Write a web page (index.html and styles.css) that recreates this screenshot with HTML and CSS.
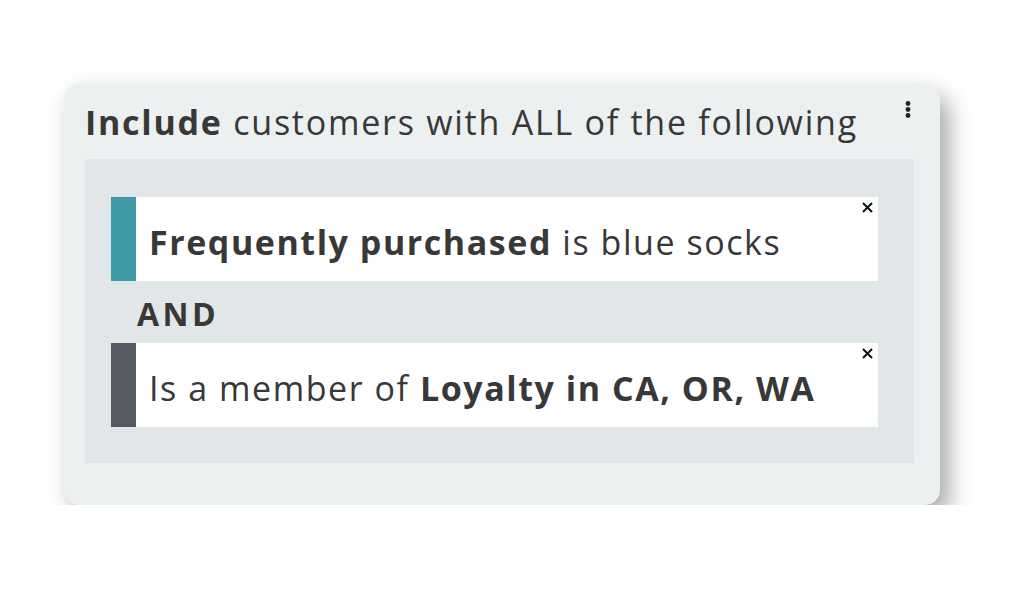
FILE: index.html
```html
<!DOCTYPE html>
<html lang="en">
<head>
  <meta charset="UTF-8" />
  <title>Segment rule</title>
  <meta name="viewport" content="width=device-width, initial-scale=1.0" />
  <link rel="stylesheet" href="styles.css">
</head>

<body>
  <div class="card">
    <button class="menu" aria-label="More options">
      <svg width="6" height="18" viewBox="0 0 6 18">
        <circle cx="3" cy="2.5" r="2.4" />
        <circle cx="3" cy="8.5" r="2.4" />
        <circle cx="3" cy="14.5" r="2.4" />
      </svg>
    </button>
    <h2 class="title"><strong>Include</strong> customers with ALL of the following</h2>

    <div class="group">
      <div class="rule rule-teal">
        <span class="bar"></span>
        <p class="rule-text"><strong>Frequently purchased</strong> is blue socks</p>
        <button class="remove" aria-label="Remove">
          <svg width="11" height="11" viewBox="0 0 11 11"><path d="M1 1 L10 10 M10 1 L1 10" /></svg>
        </button>
      </div>

      <div class="joiner">AND</div>

      <div class="rule rule-slate">
        <span class="bar"></span>
        <p class="rule-text">Is a member of <strong>Loyalty in CA, OR, WA</strong></p>
        <button class="remove" aria-label="Remove">
          <svg width="11" height="11" viewBox="0 0 11 11"><path d="M1 1 L10 10 M10 1 L1 10" /></svg>
        </button>
      </div>
    </div>
  </div>
</body>
</html>
```

FILE: styles.css
```css
body {
  margin: 0;
  background: #ffffff;
  font-family: 'Open Sans', 'Liberation Sans', sans-serif;
  color: #383838;
}

.card {
  position: relative;
  box-sizing: border-box;
  width: 876px;
  height: 421px;
  margin: 84px 0 0 64px;
  padding: 18px 26px 0 21px;
  background: #ecf0f1;
  border-radius: 15px;
  box-shadow: 10px 13px 22px rgba(0, 0, 0, 0.3), 0 0 26px rgba(0, 0, 0, 0.05);
}

.title {
  margin: 0 0 17px;
  font-size: 34px;
  line-height: 40px;
  font-weight: 400;
  letter-spacing: 1.75px;
  white-space: nowrap;
}

.title strong {
  font-weight: 700;
}

.menu {
  position: absolute;
  top: 17px;
  right: 29px;
  padding: 0;
  border: none;
  background: none;
  fill: #222;
  line-height: 0;
  cursor: pointer;
}

.group {
  height: 304px;
  box-sizing: border-box;
  padding: 38px 36px 0 26px;
  background: #e1e6e9;
}

.rule {
  position: relative;
  display: flex;
  align-items: center;
  height: 84px;
  background: #ffffff;
}

.bar {
  align-self: stretch;
  width: 25px;
  flex-shrink: 0;
}

.rule-teal .bar { background: #3f9aa5; }
.rule-slate .bar { background: #565b63; }

.rule-text {
  margin: 6px 0 0 13px;
  font-size: 34px;
  line-height: 40px;
  letter-spacing: 1.55px;
  white-space: nowrap;
}

.rule-text strong {
  font-weight: 700;
}

.remove {
  position: absolute;
  top: 5px;
  right: 5px;
  padding: 0;
  border: none;
  background: none;
  line-height: 0;
  cursor: pointer;
}

.remove path {
  stroke: #111;
  stroke-width: 2;
  fill: none;
}

.joiner {
  height: 62px;
  padding-left: 26px;
  font-size: 32px;
  line-height: 66px;
  font-weight: 700;
  letter-spacing: 3.5px;
}
```
